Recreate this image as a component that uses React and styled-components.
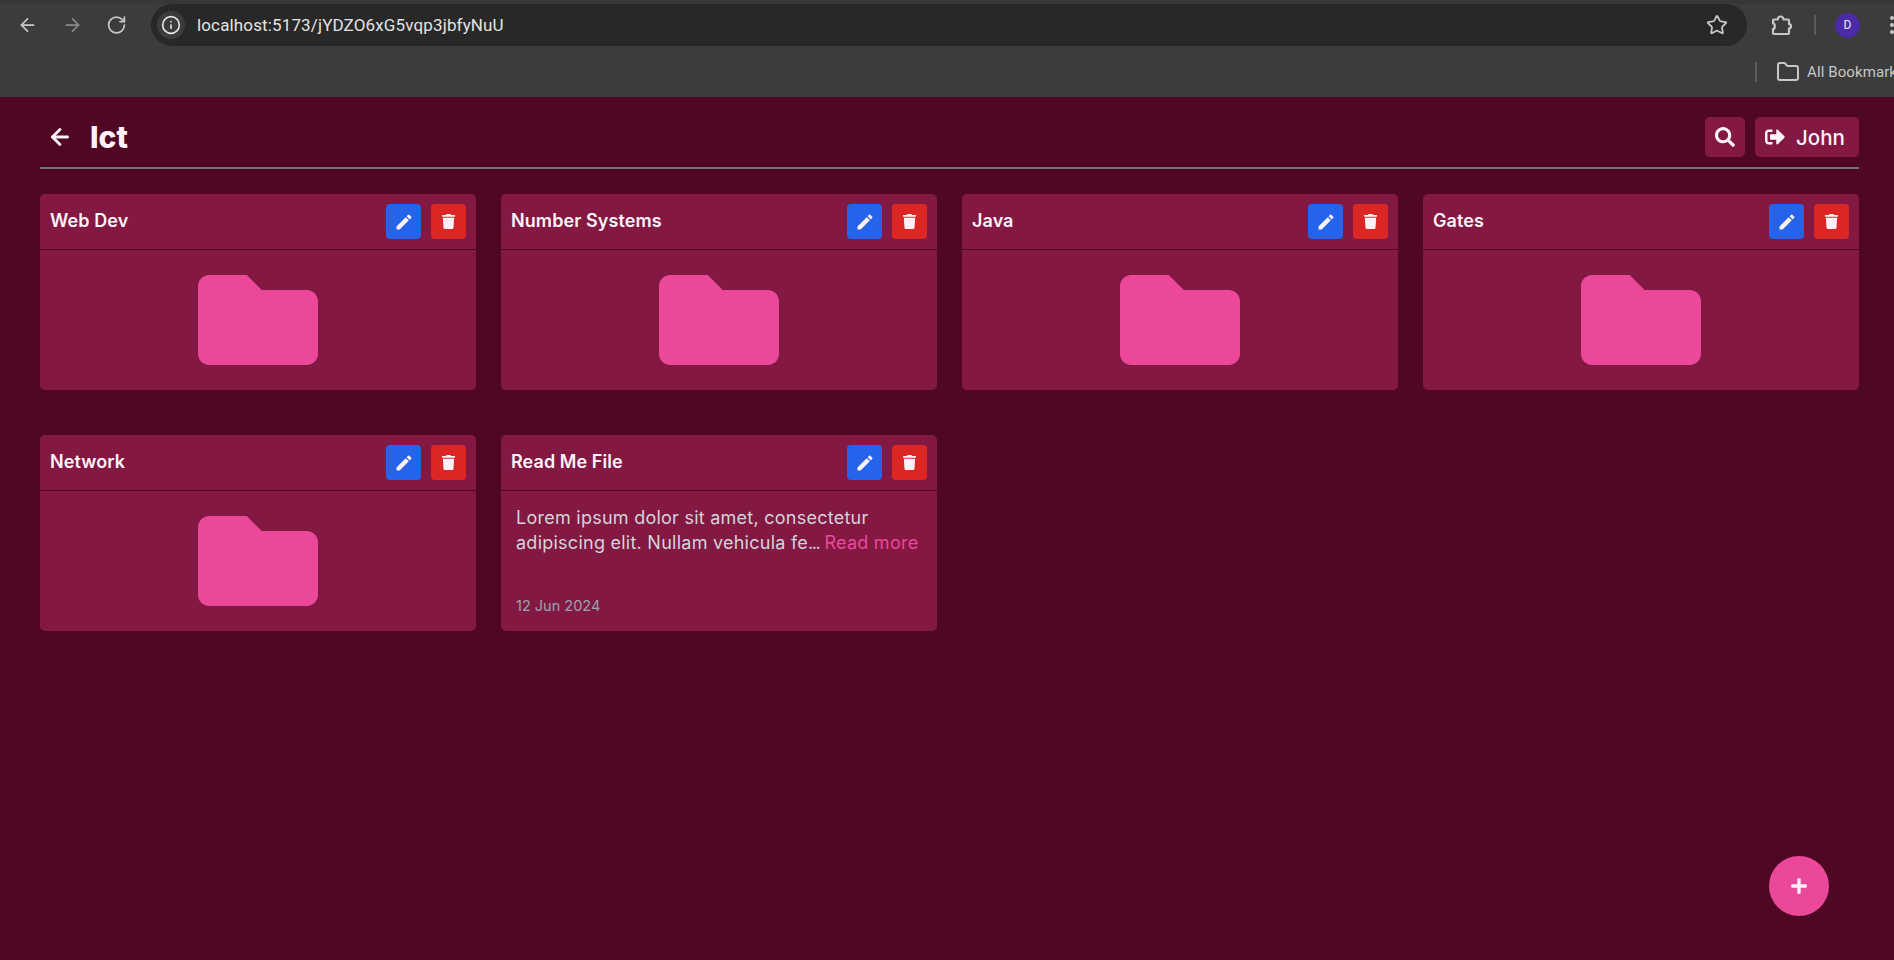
import React from "react"
import styled, { createGlobalStyle } from "styled-components"
import { ArrowLeft, ArrowRight, RotateCw, Info, Star, Folder } from "lucide-react"
import { FaFolder, FaPlus, FaSearch, FaSignOutAlt, FaTrash } from "react-icons/fa"
import { MdEdit } from "react-icons/md"

const GlobalStyle = createGlobalStyle`
  html, body {
    margin: 0;
    height: 100%;
    overflow: hidden;
    background: #500724;
    font-family: "Inter", "Liberation Sans", sans-serif;
  }
  * { box-sizing: border-box; }
`

// browser chrome
const BrowserBar = styled.div`
  height: 97px;
  background: #3c3c3c;
  border-top: 4px solid #373737;
  overflow: hidden;
`
const NavRow = styled.div`
  height: 46px;
  padding-left: 17px;
  display: flex;
  align-items: flex-start;
`
const NavButton = styled.div`
  width: 21px;
  height: 42px;
  margin-right: 23.5px;
  flex: none;
  display: flex;
  align-items: center;
  justify-content: center;
  color: ${p => (p.$off ? "#8a8a8a" : "#c7c7c7")};
`
const UrlPill = styled.div`
  width: 1596px;
  height: 42px;
  flex: none;
  padding: 0 19px 0 6.5px;
  border-radius: 21px;
  background: #282828;
  display: flex;
  align-items: center;
  color: #c7c7c7;
`
const InfoBadge = styled.div`
  width: 28px;
  height: 28px;
  border-radius: 50%;
  background: #3c3c3c;
  display: flex;
  align-items: center;
  justify-content: center;
  color: #e3e3e3;
`
const UrlText = styled.span`
  margin-left: 12px;
  flex: 1;
  color: #e3e3e3;
  letter-spacing: 0.14px;
  font: 400 17px "Roboto", sans-serif;
`
const ExtensionSlot = styled.div`
  margin-left: 22.5px;
  width: 24px;
  height: 42px;
  flex: none;
  display: flex;
  align-items: center;
  justify-content: center;
  color: #c7c7c7;
`
const ToolSeparator = styled.div`
  width: 2px;
  height: 20px;
  flex: none;
  background: #5c5c5c;
  margin-left: ${p => p.$left}px;
`
const Avatar = styled.div`
  width: 25px;
  height: 25px;
  margin-left: 19px;
  flex: none;
  border-radius: 50%;
  background: #4b2aa5;
  color: #e8e8f5;
  font: 400 12px "Roboto", sans-serif;
  display: flex;
  align-items: center;
  justify-content: center;
`
const ToolGroup = styled.div`
  height: 42px;
  display: flex;
  align-items: center;
`
const MenuDots = styled.div`
  margin-left: 30px;
  display: flex;
  flex-direction: column;
  gap: 3px;
  flex: none;
`
const MenuDot = styled.span`
  width: 4px;
  height: 4px;
  border-radius: 50%;
  background: #c7c7c7;
`
const BookmarkRow = styled.div`
  height: 47px;
  padding: 12px 0 0 1755px;
  display: flex;
  align-items: flex-start;
  white-space: nowrap;
  color: #c7c7c7;
`
const BookmarkItem = styled.div`
  margin-left: 19px;
  height: 20px;
  flex: none;
  display: flex;
  align-items: center;
  gap: 7px;
  letter-spacing: 0.1px;
  font: 400 15px "Roboto", sans-serif;
`

// page
const Main = styled.main`
  padding: 20px 35px 0 40px;
`
const Header = styled.header`
  height: 52px;
  border-bottom: 2px solid #6b7280;
  display: flex;
  align-items: flex-start;
  justify-content: space-between;
`
const HeaderLeft = styled.div`
  display: flex;
  align-items: center;
  height: 40px;
  gap: 17px;
  padding-left: 7px;
  color: #fdf2f8;
`
const PageTitle = styled.h1`
  margin: 0;
  font-size: 30px;
  font-weight: 800;
  color: #fdf2f8;
`
const HeaderRight = styled.div`
  display: flex;
  gap: 10px;
`
const HeaderButton = styled.button`
  height: 40px;
  width: ${p => (p.$wide ? "104px" : "40px")};
  padding: 0 0 0 ${p => (p.$wide ? "10px" : "0")};
  border: 0;
  border-radius: 5px;
  background: #831843;
  color: #fdf2f8;
  font: 500 20.5px "Inter", sans-serif;
  display: flex;
  align-items: center;
  justify-content: ${p => (p.$wide ? "flex-start" : "center")};
  gap: 11px;
`
const CardGrid = styled.div`
  margin-top: 25px;
  display: grid;
  grid-template-columns: repeat(4, 436px);
  column-gap: 25px;
  row-gap: 45px;
`
const Card = styled.section`
  height: 196px;
  border-radius: 5px;
  background: #831843;
  overflow: hidden;
  display: flex;
  flex-direction: column;
`
const CardHeader = styled.div`
  height: 56px;
  flex: none;
  padding: 0 10px;
  border-bottom: 1px solid #500724;
  display: flex;
  align-items: center;
  justify-content: space-between;
`
const CardTitle = styled.h2`
  margin: 0 0 2px;
  font-size: 18px;
  font-weight: 600;
  letter-spacing: 0.08px;
  color: #fdf2f8;
`
const CardActions = styled.div`
  display: flex;
  gap: 10px;
`
const IconButton = styled.button`
  width: 35px;
  height: 35px;
  padding: 0;
  border: 0;
  border-radius: 4px;
  background: ${p => (p.$danger ? "#dc2626" : "#2563eb")};
  color: #fdf2f8;
  display: flex;
  align-items: center;
  justify-content: center;
`
const FolderBody = styled.div`
  flex: 1;
  display: flex;
  align-items: center;
  justify-content: center;
  color: #ec4899;
`
const FileBody = styled.div`
  flex: 1;
  padding: 14px 8px 17px 15px;
  display: flex;
  flex-direction: column;
  justify-content: space-between;
`
const FileText = styled.p`
  margin: 0;
  font-size: 18px;
  line-height: 25px;
  letter-spacing: 0.25px;
  color: #d1d5db;
`
const Dots = styled.span`
  letter-spacing: -1.5px;
`
const ReadMore = styled.span`
  color: #ec4899;
`
const FileDate = styled.span`
  font-size: 14.5px;
  color: #9ca3af;
`
const AddButton = styled.button`
  position: fixed;
  left: 1769px;
  top: 856px;
  width: 60px;
  height: 60px;
  padding: 0;
  border: 0;
  border-radius: 50%;
  background: #ec4899;
  color: #fdf2f8;
  display: flex;
  align-items: center;
  justify-content: center;
`

const folders = ["Web Dev", "Number Systems", "Java", "Gates", "Network"]

// chrome's extension piece, lucide's puzzle has another outline
function ExtensionIcon() {
  return (
    <svg width="24" height="24" viewBox="0 0 24 24" fill="none" stroke="currentColor" strokeWidth="2.2" strokeLinejoin="round">
      <path d="M5 6.500h3.800c-.4-4 6-4 5.600 0H19a1 1 0 0 1 1 1v3.600c2.600 0 2.600 4.200 0 4.200V20a1 1 0 0 1-1 1H5a1 1 0 0 1-1-1v-3.800c2.400-.2 2.400-5.600 0-5.800V7.500a1 1 0 0 1 1-1z" />
    </svg>
  )
}

function CardTop({ title }) {
  return (
    <CardHeader>
      <CardTitle>{title}</CardTitle>
      <CardActions>
        <IconButton><MdEdit size={20} /></IconButton>
        <IconButton $danger><FaTrash size={15} /></IconButton>
      </CardActions>
    </CardHeader>
  )
}

export default function App() {
  return (
    <>
      <GlobalStyle />
      <BrowserBar>
        <NavRow>
          <NavButton><ArrowLeft size={24} /></NavButton>
          <NavButton $off><ArrowRight size={24} /></NavButton>
          <NavButton><RotateCw size={22} /></NavButton>
          <UrlPill>
            <InfoBadge><Info size={20} /></InfoBadge>
            <UrlText>localhost:5173/jYDZO6xG5vqp3jbfyNuU</UrlText>
            <Star size={22} />
          </UrlPill>
          <ToolGroup>
            <ExtensionSlot><ExtensionIcon /></ExtensionSlot>
            <ToolSeparator $left={21} />
            <Avatar>D</Avatar>
            <MenuDots><MenuDot /><MenuDot /><MenuDot /></MenuDots>
          </ToolGroup>
        </NavRow>
        <BookmarkRow>
          <ToolSeparator $left={0} />
          <BookmarkItem><Folder size={24} />All Bookmarks</BookmarkItem>
        </BookmarkRow>
      </BrowserBar>
      <Main>
        <Header>
          <HeaderLeft>
            <ArrowLeft size={26} strokeWidth={2.6} />
            <PageTitle>Ict</PageTitle>
          </HeaderLeft>
          <HeaderRight>
            <HeaderButton><FaSearch size={20} /></HeaderButton>
            <HeaderButton $wide><FaSignOutAlt size={20} />John</HeaderButton>
          </HeaderRight>
        </Header>
        <CardGrid>
          {folders.map(name => (
            <Card key={name}>
              <CardTop title={name} />
              <FolderBody><FaFolder size={120} /></FolderBody>
            </Card>
          ))}
          <Card>
            <CardTop title="Read Me File" />
            <FileBody>
              <FileText>
                Lorem ipsum dolor sit amet, consectetur adipiscing elit. Nullam vehicula fe<Dots>...</Dots> <ReadMore>Read more</ReadMore>
              </FileText>
              <FileDate>12 Jun 2024</FileDate>
            </FileBody>
          </Card>
        </CardGrid>
      </Main>
      <AddButton><FaPlus size={18} /></AddButton>
    </>
  )
}
